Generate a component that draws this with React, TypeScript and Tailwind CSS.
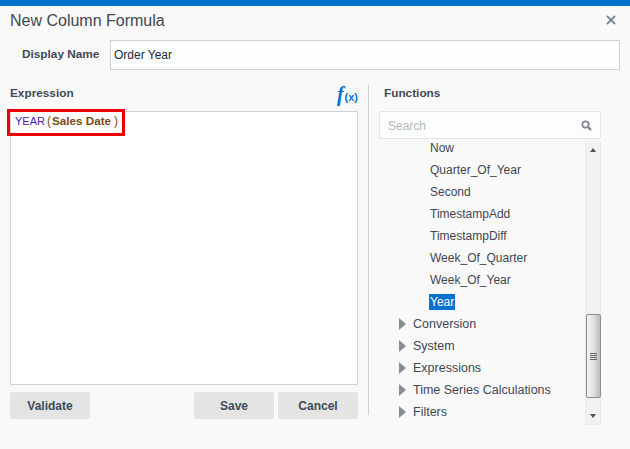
import { X } from "lucide-react";

const functions = [
  "Now",
  "Quarter_Of_Year",
  "Second",
  "TimestampAdd",
  "TimestampDiff",
  "Week_Of_Quarter",
  "Week_Of_Year",
];

const folders = ["Conversion", "System", "Expressions", "Time Series Calculations", "Filters"];

function Caret() {
  return (
    <svg width="7" height="12" viewBox="0 0 7 12" className="shrink-0">
      <path d="M0 0 L7 6 L0 12 Z" fill="#8a8d90" />
    </svg>
  );
}

function SearchIcon() {
  return (
    <svg width="11" height="11" viewBox="0 0 11 11" fill="none" stroke="#80868c">
      <circle cx="4.5" cy="4.5" r="3.2" strokeWidth="1.8" />
      <path d="M7 7 L10 10" strokeWidth="2.4" />
    </svg>
  );
}

function Button({ label, className }: { label: string; className: string }) {
  return (
    <button className={`h-[27px] w-20 rounded-[2px] bg-[#e4e4e4] pt-[1px] text-[12px] font-bold text-[#3f4a56] ${className}`}>
      {label}
    </button>
  );
}

export default function App() {
  return (
    <div className="h-[449px] w-[630px] overflow-hidden bg-[#f9f9f9] font-['Liberation_Sans',Arial,sans-serif] text-[#333e4a]">
      <div className="h-[6px] bg-[#0572ce]" />

      {/* Title */}
      <div className="flex h-[29px] items-center justify-between pl-[10px] pr-[12px] pt-[1px]">
        <h1 className="text-[16px] leading-[28px] text-[#3f4750]">New Column Formula</h1>
        <X size={14} strokeWidth={3.2} className="mb-[3px] text-[#7f878f]" />
      </div>

      {/* Display name */}
      <div className="mt-[5px] flex items-center pr-[10px]">
        <label className="w-[110px] pl-[22px] text-[11.8px] font-bold text-[#3f4a56]">Display Name</label>
        <div className="flex h-[30px] flex-1 items-center border border-[#d0d0d0] bg-[#fdfeff] pl-[3px] text-[12px] text-[#252c35]">
          Order Year
        </div>
      </div>

      <div className="mt-[15px] flex">
        {/* Expression column */}
        <div className="w-[358px] pl-[10px]">
          <div className="flex h-[26px] items-start justify-between">
            <span className="pt-[1px] text-[11.8px] font-bold leading-[14px] text-[#3f4a56]">Expression</span>
            <span className="flex items-baseline font-['Liberation_Serif',serif] font-bold italic leading-[18px] text-[#0572ce]">
              <span className="text-[20px] leading-[18px]">f</span>
              <span className="ml-[1px] font-['Liberation_Sans',sans-serif] text-[11px] not-italic">(x)</span>
            </span>
          </div>
          <div className="relative h-[274px] border border-[#d0d0d0] bg-white">
            <div className="absolute -left-[4px] -top-[3px] flex h-[27px] w-[118px] items-center border-[3px] border-[#f00000] pb-[3px] pl-[5px] text-[12px] leading-none">
              <span className="text-[11px] text-[#4b1fa8]">YEAR</span>
              <span className="ml-[2px] text-[#7a4a12]">(</span>
              <span className="ml-[1px] text-[11.7px] font-bold text-[#7a4a12]">Sales Date</span>
              <span className="ml-[3px] text-[#7a4a12]">)</span>
            </div>
          </div>
          <div className="mt-[7px] flex">
            <Button label="Validate" className="" />
            <Button label="Save" className="ml-auto" />
            <Button label="Cancel" className="ml-[4px]" />
          </div>
        </div>

        {/* Divider */}
        <div className="ml-[10px] h-[330px] w-px bg-[#d0d0d0]" />

        {/* Functions column */}
        <div className="ml-[10px] w-[222px]">
          <div className="h-[26px] pl-[5px] pt-[1px] text-[11.8px] font-bold leading-[14px] text-[#3f4a56]">Functions</div>
          <div className="flex h-[28px] items-center justify-between rounded-[2px] border border-[#e2e4e6] bg-[#fcfdfe] pl-[8px] pr-[8px] pt-[1px] text-[12px] text-[#b5b8bb]">
            <span>Search</span>
            <SearchIcon />
          </div>
          <div className="mt-[2px] flex h-[284px]">
            <div className="-mt-[4px] flex-1 text-[12px] text-[#3f4750]">
              <ul className="pl-[51px]">
                {functions.map((name) => (
                  <li key={name} className="flex h-[22px] items-center">
                    {name}
                  </li>
                ))}
                <li className="flex h-[22px] items-center">
                  <span className="-ml-px bg-[#0572ce] px-px leading-[16px] text-white">Year</span>
                </li>
              </ul>
              <ul className="pl-[20px] text-[12.5px]">
                {folders.map((name) => (
                  <li key={name} className="flex h-[22px] items-center gap-[7px]">
                    <Caret />
                    <span>{name}</span>
                  </li>
                ))}
              </ul>
            </div>

            {/* Scrollbar */}
            <div className="flex w-[16px] flex-col items-center border-x border-b border-[#eaeaea] bg-[#f1f1f1]">
              <div className="flex h-[17px] items-center justify-center">
                <div className="h-0 w-0 border-x-[3.5px] border-b-[4px] border-x-transparent border-b-[#505050]" />
              </div>
              <div className="mt-[156px] flex h-[84px] w-[15px] flex-col items-center justify-center gap-[1px] rounded-[2px] border border-[#8f8f8f] bg-gradient-to-r from-[#f2f2f2] via-[#e2e2e2] to-[#bcbcbc]">
                <div className="h-px w-[7px] bg-[#666]" />
                <div className="h-px w-[7px] bg-[#666]" />
                <div className="h-px w-[7px] bg-[#666]" />
                <div className="h-px w-[7px] bg-[#666]" />
              </div>
              <div className="flex flex-1 items-end justify-center pb-[6px]">
                <div className="h-0 w-0 border-x-[3.5px] border-t-[4px] border-x-transparent border-t-[#505050]" />
              </div>
            </div>
          </div>
        </div>
      </div>
    </div>
  );
}
